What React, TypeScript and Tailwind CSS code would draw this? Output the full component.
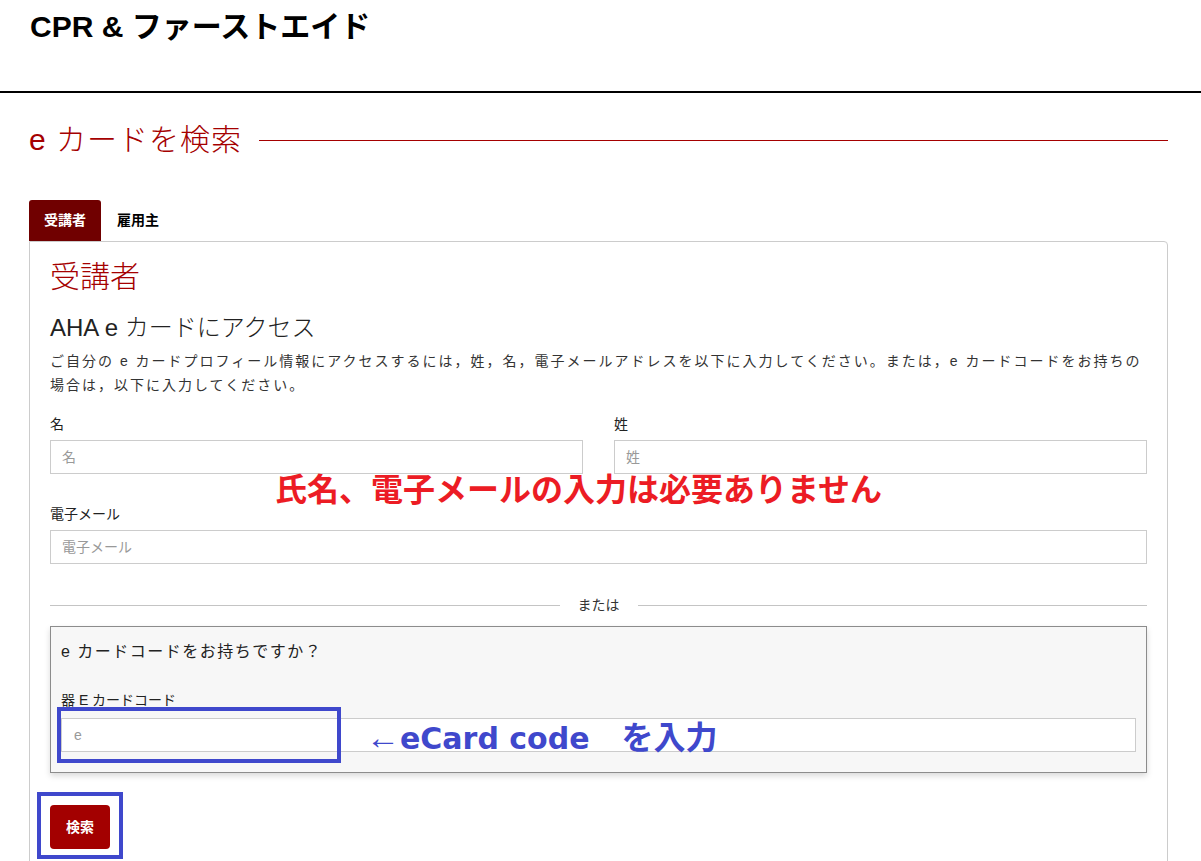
import React from 'react';

const jp = { fontFamily: '"Liberation Sans", "Noto Sans CJK JP", sans-serif' };

const Field = ({ label, placeholder }: { label: string; placeholder: string }) => (
  <div>
    <label className="block text-[14px] leading-[20px] text-[#222]">{label}</label>
    <input
      placeholder={placeholder}
      className="mt-[6px] block h-[34px] w-full border border-[#cccccc] bg-white px-[11px] text-[14px] text-[#333] placeholder:text-[#999] focus:outline-none"
    />
  </div>
);

export default function App() {
  return (
    <div className="relative h-[861px] w-[1201px] overflow-hidden bg-white text-[#222]" style={jp}>
      <header className="h-[93px] border-b-2 border-black pl-[30px] pt-[9px]">
        <h1 className="text-[30px] font-bold leading-[36px] text-black">CPR &amp; ファーストエイド</h1>
      </header>

      <main className="pl-[29px] pr-[33px]">
        <div className="mt-[29px] flex items-center">
          <h2 className="text-[30px] font-light leading-[36px] tracking-[1px] text-[#a50000]">e カードを検索</h2>
          <div className="ml-[17px] h-px flex-1 bg-[#a50000]" />
        </div>

        <div className="mt-[42px] flex items-end">
          <button className="flex h-[41px] w-[72px] items-center justify-center rounded-t-[3px] bg-[#700000] text-[14px] font-bold text-white">
            受講者
          </button>
          <button className="flex h-[41px] items-center px-[16px] text-[14px] font-bold text-black">雇用主</button>
        </div>

        <section className="h-[700px] rounded-tr-[4px] border border-[#cccccc] px-[20px] pt-[17px]">
          <h3 className="text-[30px] font-light leading-[36px] text-[#a50000]">受講者</h3>
          <h4 className="mt-[17px] text-[24px] font-light leading-[32px] text-[#222]">AHA e カードにアクセス</h4>
          <p className="mt-[5px] text-[14px] leading-[24px] tracking-[2px] text-[#333]">
            ご自分の e カードプロフィール情報にアクセスするには，姓，名，電子メールアドレスを以下に入力してください。または，e カードコードをお持ちの場合は，以下に入力してください。
          </p>

          <div className="mt-[17px] grid grid-cols-2 gap-x-[31px]">
            <Field label="名" placeholder="名" />
            <Field label="姓" placeholder="姓" />
          </div>

          <div className="mt-[30px]">
            <Field label="電子メール" placeholder="電子メール" />
          </div>

          <div className="mt-[31px] flex h-[20px] items-center">
            <div className="h-px flex-1 bg-[#c4c4c4]" />
            <span className="mx-[18px] text-[14px] text-[#333]">または</span>
            <div className="h-px flex-1 bg-[#c4c4c4]" />
          </div>

          <div className="mt-[11px] border border-[#8c8c8c] bg-[#f7f7f7] px-[10px] pb-[20px] pt-[14px] shadow-[0_3px_6px_rgba(0,0,0,0.15)]">
            <p className="text-[16px] leading-[22px] tracking-[1.5px] text-[#222]">e カードコードをお持ちですか？</p>
            <label className="mt-[27px] block text-[14px] leading-[20px] text-[#222]">器 E カードコード</label>
            <input
              placeholder="e"
              className="mt-[8px] block h-[34px] w-full border border-[#cccccc] bg-white px-[12px] text-[14px] placeholder:text-[#999] focus:outline-none"
            />
          </div>

          <button className="mt-[32px] flex h-[44px] w-[60px] items-center justify-center rounded-[4px] bg-[#a30000] text-[14px] font-bold text-white">
            検索
          </button>
        </section>
      </main>

      {/* annotations drawn over the screenshot */}
      <div className="absolute left-[275px] top-[470px] text-[32px] font-bold leading-[40px] text-[#ec1c24]">
        氏名、電子メールの入力は必要ありません
      </div>
      <div className="absolute left-[57px] top-[707px] h-[56px] w-[284px] border-[4px] border-[#3f48cc]" />
      <div className="absolute left-[366px] top-[717px] flex items-baseline font-bold leading-[40px] text-[#3f48cc]">
        <span className="text-[34px] font-normal">←</span>
        <span className="text-[30px]" style={{ fontFamily: '"DejaVu Sans", sans-serif' }}>
          eCard code
        </span>
        <span className="text-[32px]">　を入力</span>
      </div>
      <div className="absolute left-[37px] top-[792px] h-[67px] w-[86px] border-[4px] border-[#3f48cc]" />
    </div>
  );
}
